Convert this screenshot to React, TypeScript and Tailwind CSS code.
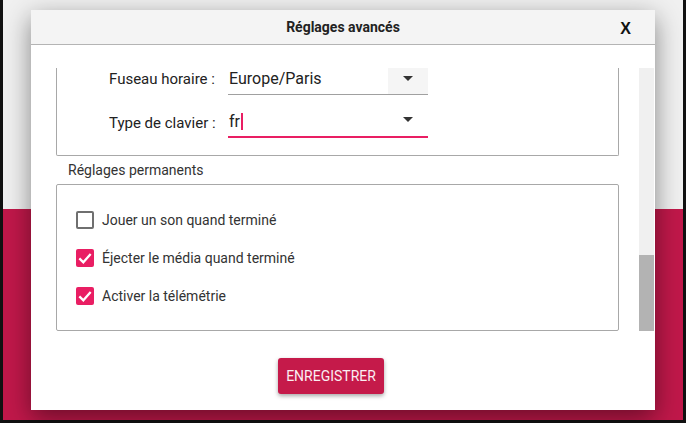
import React from 'react';

const font = { fontFamily: 'Roboto, "Noto Sans", sans-serif' };

function Arrow() {
  return (
    <svg width="10" height="6" viewBox="0 0 10 6" className="block">
      <path d="M0 0 L10 0 L5 5 Z" fill="#333333" />
    </svg>
  );
}

function CheckRow({ label, checked }: { label: string; checked: boolean }) {
  return (
    <div className="flex h-[38px] items-center gap-[8px]">
      {checked ? (
        <div className="flex h-[18px] w-[18px] items-center justify-center rounded-[2px] bg-[#e91e63]">
          <svg width="16" height="16" viewBox="0 0 24 24">
            <path d="M3.5 12.5 L9.5 18.5 L20.5 6" fill="none" stroke="#ffffff" strokeWidth="3.4" />
          </svg>
        </div>
      ) : (
        <div className="h-[18px] w-[18px] rounded-[2px] border-2 border-[#6f6f6f] bg-white" />
      )}
      <span className="text-[14px] text-[#333333]">{label}</span>
    </div>
  );
}

export default function App() {
  return (
    <div className="relative h-[423px] w-[686px] overflow-hidden bg-[#111111]" style={font}>
      <div className="mx-[3px] flex h-[420px] flex-col">
        <div className="h-[209px] bg-[#f0f0f0]" />
        <div className="flex-1 bg-[#c0184a]" />
      </div>

      <div className="absolute left-[31px] top-[10px] flex h-[400px] w-[624px] flex-col bg-white shadow-[0_8px_24px_rgba(0,0,0,0.45)]">
        <div className="relative flex h-[35px] items-center justify-center border-b border-[#b4b4b4] bg-[#f4f4f4]">
          <span className="text-[14px] font-bold text-[#222222]">Réglages avancés</span>
          <span
            className="absolute right-[24px] top-[7px] text-[16px] font-bold text-[#111111]"
            style={{ fontFamily: '"Liberation Sans", Arial, sans-serif' }}
          >
            X
          </span>
        </div>

        <div className="mt-[23px] flex h-[263px]">
          <div className="ml-[25px] h-full w-[563px] overflow-hidden">
            <div className="-mt-[11px]">
              <div className="rounded-b-[2px] border-x border-b border-[#a8a8a8] pb-[17px]">
                <div className="grid grid-cols-[110px_200px] gap-x-[9px] gap-y-[5px] pl-[52px]">
                  <div className="flex h-[38px] items-end pb-[6px] text-[15px] leading-[19px] text-[#222222]">
                    Fuseau horaire :
                  </div>
                  <div className="flex h-[38px] items-stretch border-b border-[#a0a0a0]">
                    <div className="flex flex-1 items-end pb-[6px] pl-[1px] text-[16px] leading-[19px] text-[#222222]">
                      Europe/Paris
                    </div>
                    <div className="flex w-[40px] items-end justify-center bg-[#f5f5f5] pb-[12px]">
                      <Arrow />
                    </div>
                  </div>
                  <div className="flex h-[38px] items-end pb-[5px] text-[15px] leading-[19px] text-[#222222]">
                    Type de clavier :
                  </div>
                  <div className="flex h-[38px] items-stretch border-b-2 border-[#e91e63]">
                    <div className="flex flex-1 items-end pb-[5px] pl-[1px] text-[16px] leading-[19px] text-[#222222]">
                      fr
                      <span className="mb-[1px] ml-[1px] inline-block h-[17px] w-[2px] bg-[#e91e63]" />
                    </div>
                    <div className="flex w-[40px] items-end justify-center pb-[13px]">
                      <Arrow />
                    </div>
                  </div>
                </div>
              </div>

              <div className="flex h-[28px] items-center pl-[12px] text-[14px] text-[#333333]">
                Réglages permanents
              </div>

              <div className="h-[147px] rounded-[2px] border border-[#a8a8a8] pl-[19px] pt-[16px]">
                <CheckRow label="Jouer un son quand terminé" checked={false} />
                <CheckRow label="Éjecter le média quand terminé" checked={true} />
                <CheckRow label="Activer la télémétrie" checked={true} />
              </div>
            </div>
          </div>

          <div className="ml-[20px] flex h-full w-[15px] flex-col justify-end bg-[#f0f0f0]">
            <div className="h-[76px] bg-[#b3b3b3]" />
          </div>
        </div>

        <div className="flex flex-1 items-start justify-center pr-[24px] pt-[27px]">
          <button className="h-[36px] w-[106px] rounded-[3px] bg-[#c51a4a] text-[14px] text-[#fbeef2] shadow-[0_2px_4px_rgba(0,0,0,0.35)]">
            ENREGISTRER
          </button>
        </div>
      </div>
    </div>
  );
}
